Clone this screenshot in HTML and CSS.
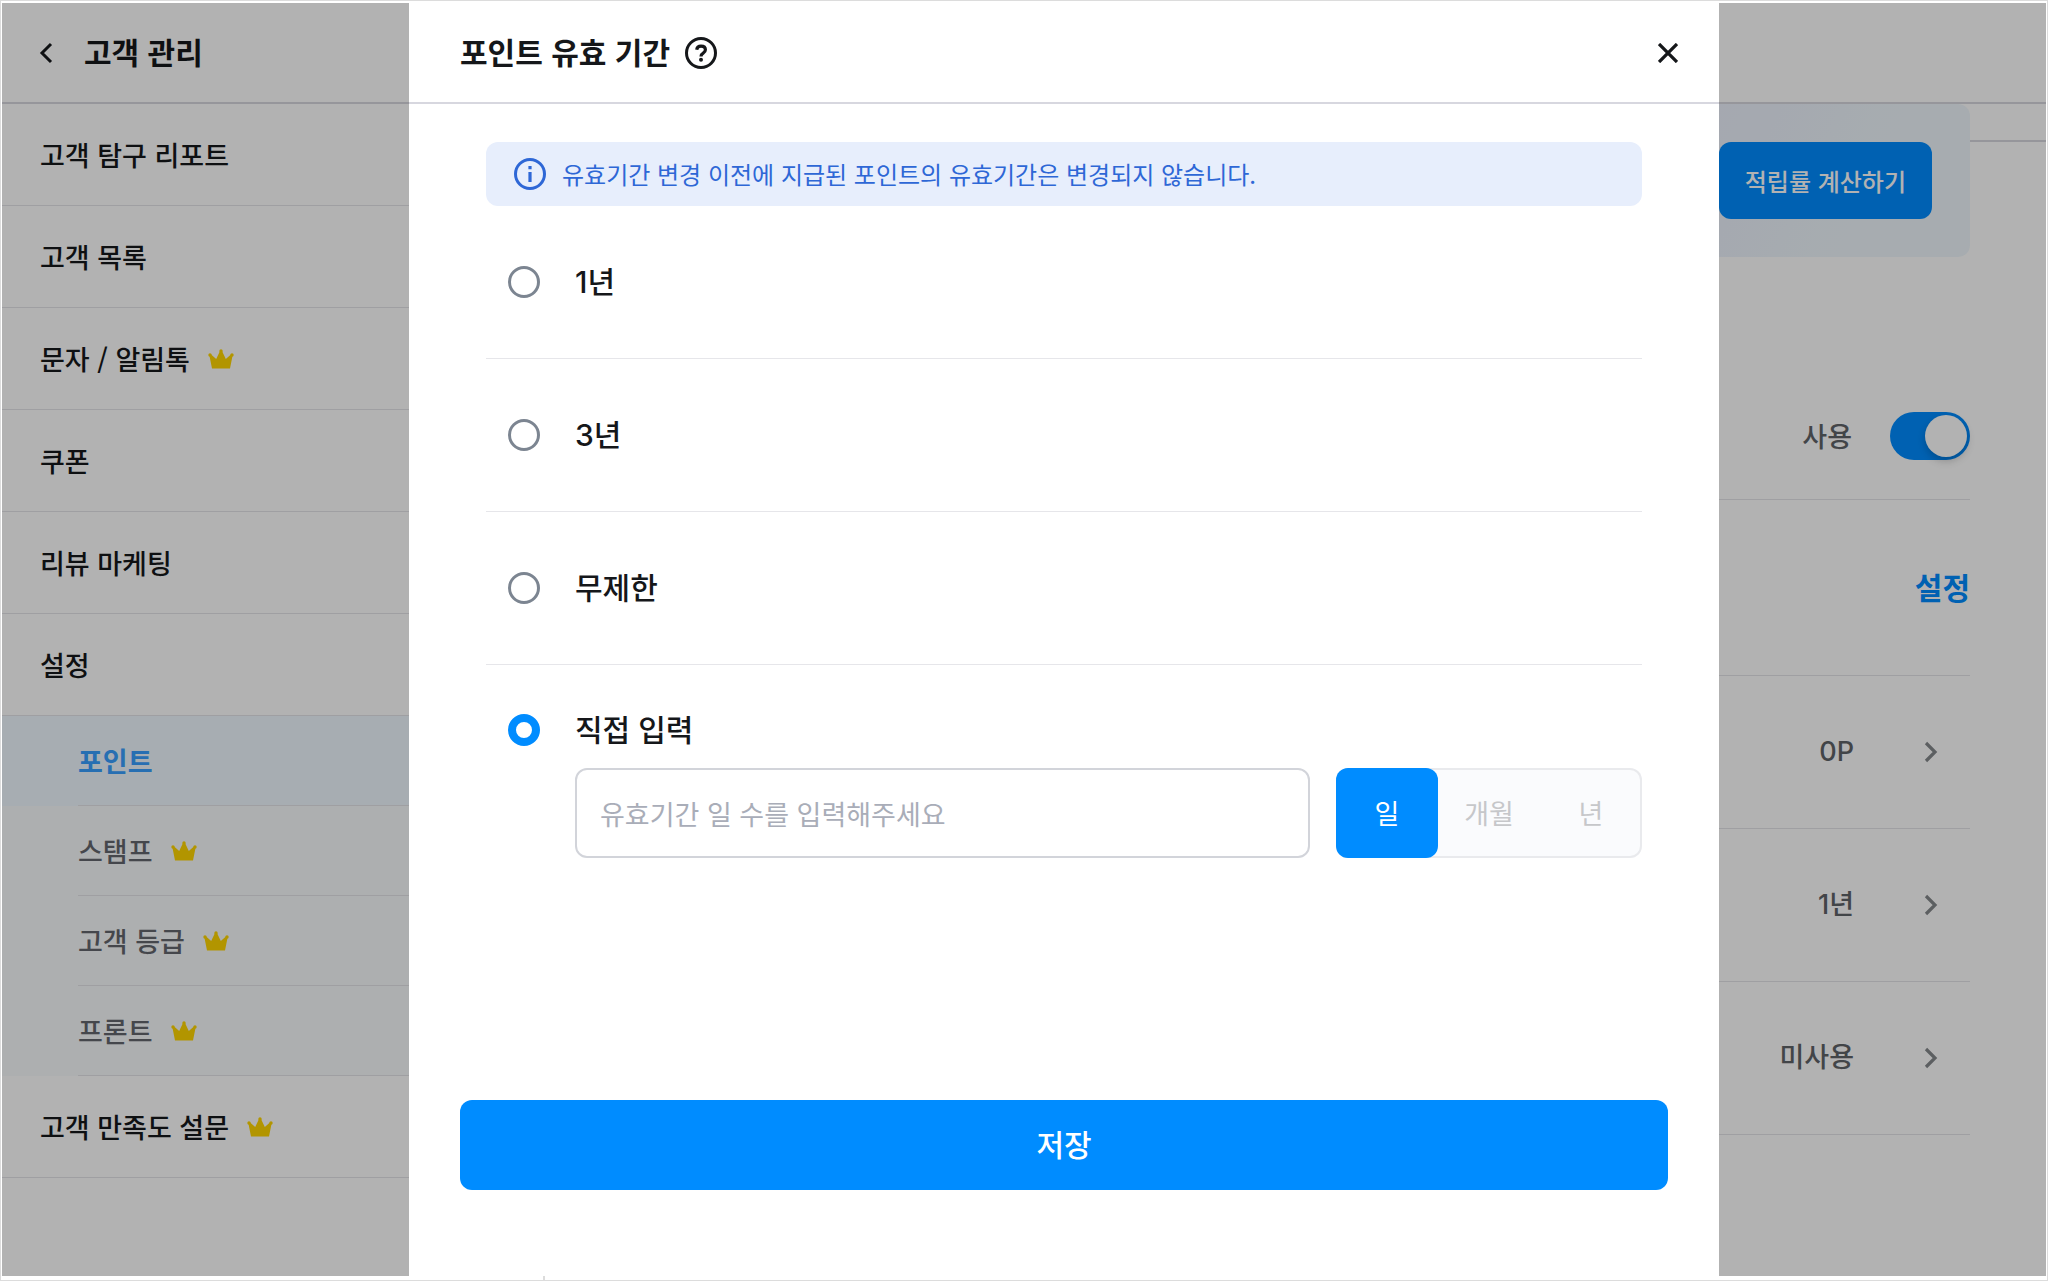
FILE: index.html
```html
<!DOCTYPE html>
<html lang="ko">
<head>
<meta charset="utf-8">
<meta name="viewport" content="width=device-width, initial-scale=1">
<title>포인트 유효 기간</title>
<link rel="stylesheet" href="styles.css">
</head>
<body>
<svg class="sprite" aria-hidden="true">
  <symbol id="crown" viewBox="0 0 26 20">
    <path d="M4 19.500 1.300 6 2.800 5.200 8.200 10 12 2h2l3.800 8 5.400-4.800 1.500.8L22 19.500Z"/>
    <circle cx="13" cy="2" r="1.700"/>
    <circle cx="2" cy="6" r="1.700"/>
    <circle cx="24" cy="6" r="1.700"/>
  </symbol>
  <symbol id="chevron" viewBox="0 0 24 24">
    <path d="M6 3 15 12 6 21" fill="none" stroke="currentColor" stroke-width="3.200"/>
  </symbol>
</svg>
<div class="frame">
  <div class="page">
    <aside class="sidebar">
      <header class="bar sidebar-head">
        <button class="icon-button" type="button" aria-label="뒤로">
          <svg class="back" viewBox="0 0 14 22"><path d="M12 2 3 11l9 9" fill="none" stroke="currentColor" stroke-width="3"/></svg>
        </button>
        <h1 class="title">고객 관리</h1>
      </header>
      <nav>
        <ul class="menu">
          <li><a class="menu-item" href="#">고객 탐구 리포트</a></li>
          <li><a class="menu-item" href="#">고객 목록</a></li>
          <li><a class="menu-item" href="#">문자 / 알림톡<svg class="crown"><use href="#crown"/></svg></a></li>
          <li><a class="menu-item" href="#">쿠폰</a></li>
          <li><a class="menu-item" href="#">리뷰 마케팅</a></li>
          <li>
            <a class="menu-item" href="#">설정</a>
            <ul class="submenu">
              <li class="active"><a class="submenu-item" href="#">포인트</a></li>
              <li><a class="submenu-item" href="#">스탬프<svg class="crown"><use href="#crown"/></svg></a></li>
              <li><a class="submenu-item" href="#">고객 등급<svg class="crown"><use href="#crown"/></svg></a></li>
              <li><a class="submenu-item" href="#">프론트<svg class="crown"><use href="#crown"/></svg></a></li>
            </ul>
          </li>
          <li><a class="menu-item" href="#">고객 만족도 설문<svg class="crown"><use href="#crown"/></svg></a></li>
        </ul>
      </nav>
    </aside>
    <main class="main">
      <div class="bar"></div>
      <div class="subbar"></div>
      <section class="banner">
        <button class="calc" type="button">적립률 계산하기</button>
      </section>
      <div class="settings">
        <div class="setting setting-use">
          <label for="use">사용</label>
          <input class="switch" id="use" type="checkbox" role="switch" checked>
        </div>
        <div class="setting setting-rate"><a class="link" href="#">설정</a></div>
        <div class="setting setting-row">0P<svg class="chevron"><use href="#chevron"/></svg></div>
        <div class="setting setting-row">1년<svg class="chevron"><use href="#chevron"/></svg></div>
        <div class="setting setting-row">미사용<svg class="chevron"><use href="#chevron"/></svg></div>
      </div>
    </main>
  </div>

  <div class="backdrop">
    <form class="modal" role="dialog" aria-labelledby="modal-title">
      <header class="bar modal-head">
        <h2 class="title" id="modal-title">포인트 유효 기간</h2>
        <button class="icon-button" type="button" aria-label="도움말">
          <svg class="round-icon" viewBox="0 0 32 32" fill="none" stroke="currentColor">
            <circle cx="16" cy="16" r="14.500" stroke-width="3"/>
            <path d="M11.700 12.800C12 10.500 13.600 9.200 16 9.200c2.600 0 4.400 1.400 4.400 3.600 0 1.600-.9 2.500-2.200 3.300-1.500.9-2.200 1.600-2.200 3.500" stroke-width="3.200"/>
            <circle cx="16" cy="22.800" r="2" fill="currentColor" stroke="none"/>
          </svg>
        </button>
        <button class="icon-button close" type="button" aria-label="닫기">
          <svg class="close-icon" viewBox="0 0 20 20"><path d="M1 1l18 18M19 1 1 19" fill="none" stroke="currentColor" stroke-width="3.300"/></svg>
        </button>
      </header>
      <div class="modal-body">
        <p class="notice">
          <svg class="round-icon" viewBox="0 0 32 32" fill="none" stroke="currentColor">
            <circle cx="16" cy="16" r="14.500" stroke-width="3"/>
            <path d="M16 14v10M16 8v3.200" stroke-width="3.200"/>
          </svg>
          유효기간 변경 이전에 지급된 포인트의 유효기간은 변경되지 않습니다.
        </p>
        <label class="option"><input class="radio" type="radio" name="period">1년</label>
        <label class="option"><input class="radio" type="radio" name="period">3년</label>
        <label class="option"><input class="radio" type="radio" name="period">무제한</label>
        <label class="option option-custom"><input class="radio" type="radio" name="period" checked>직접 입력</label>
        <div class="custom">
          <input class="days" type="text" inputmode="numeric" aria-label="유효기간" placeholder="유효기간 일 수를 입력해주세요">
          <div class="units" role="group" aria-label="단위">
            <button class="unit selected" type="button">일</button>
            <button class="unit" type="button">개월</button>
            <button class="unit" type="button">년</button>
          </div>
        </div>
      </div>
      <footer class="modal-foot"><button class="save" type="submit">저장</button></footer>
    </form>
  </div>
</div>
</body>
</html>
```
FILE: styles.css
```css
* { box-sizing: border-box; }

body {
  margin: 0;
  color: #15171a;
  background: #fff;
  font-family: "Noto Sans CJK KR", "Noto Sans", sans-serif;
  font-size: 27px;
  font-weight: 500;
  line-height: 40px;
}

h1, h2, p, ul { margin: 0; padding: 0; }
ul { list-style: none; }
a { color: inherit; text-decoration: none; }
button, input { font: inherit; color: inherit; margin: 0; }
button { padding: 0; border: 0; background: none; cursor: pointer; }
svg { display: block; flex: none; }
.sprite { display: none; }

.frame {
  position: relative;
  display: flex;
  min-height: 100vh;
  padding: 2px 1px 4px;
  border: 1px solid #dcdcdc;
}
/* stub of the divider that continues below the window */
.frame::after {
  content: "";
  position: absolute;
  left: 542px;
  bottom: 0;
  width: 2px;
  height: 4px;
  background: #dcdcdc;
}

.page { display: flex; flex: 1; }

.bar {
  display: flex;
  align-items: center;
  height: 101px;
  border-bottom: 2px solid #d7d7df;
}
.title { padding-bottom: 4px; font-size: 30px; font-weight: 700; }
.icon-button { display: flex; }

/* sidebar */
.sidebar { flex: none; width: 407px; }
.sidebar-head { gap: 31px; padding-left: 37px; }
.back { width: 14px; height: 22px; }
.menu-item {
  display: flex;
  align-items: center;
  gap: 18px;
  height: 102px;
  padding-left: 38px;
  border-bottom: 1px solid #e4e4e8;
}
.submenu { color: #63666d; background: #f8fbfd; }
.submenu li { padding-left: 76px; }
.submenu-item {
  display: flex;
  align-items: center;
  gap: 18px;
  height: 90px;
  border-bottom: 1px solid #e4e4e8;
}
.submenu .active { color: #38a0ff; background: #f0f8ff; font-weight: 700; }
.crown { width: 26px; height: 20px; fill: #ffd600; }

/* page content */
.main { flex: 1; display: flex; flex-direction: column; }
.subbar { height: 38px; border-bottom: 2px solid #d7d7df; }
.banner {
  display: flex;
  justify-content: flex-end;
  margin: -38px 76px 0 0;
  padding: 38px;
  border-radius: 0 12px 12px 0;
  background: linear-gradient(115deg, #ecf1fc 80%, #eff7fc 92%);
}
.calc {
  height: 77px;
  padding: 0 26px;
  border-radius: 12px;
  color: #fff;
  background: #008cff;
  font-size: 24px;
}
.settings { margin: 116px 76px 0 0; color: #5f6368; }
.setting {
  display: flex;
  align-items: center;
  justify-content: flex-end;
  border-bottom: 1px solid #e4e4e8;
}
.setting-use { gap: 38px; height: 127px; }
.setting-rate { height: 176px; }
.setting-row {
  gap: 66px;
  height: 153px;
  padding-right: 26px;
  font-family: Inter, "Noto Sans CJK KR", sans-serif;
}
.link { padding-bottom: 4px; color: #008cff; font-size: 30px; font-weight: 700; }
.chevron { width: 24px; height: 24px; color: #85888c; }
.switch {
  appearance: none;
  display: flex;
  justify-content: flex-end;
  width: 80px;
  height: 48px;
  padding: 3px;
  border-radius: 24px;
  background: #008cff;
}
.switch::before {
  content: "";
  width: 42px;
  height: 42px;
  border-radius: 50%;
  background: #fff;
  box-shadow: 0 4px 8px rgba(0, 0, 0, .2);
}

/* modal */
.backdrop {
  position: absolute;
  inset: 2px 1px 4px;
  display: flex;
  padding: 0 327px 0 407px;
  background: rgba(0, 0, 0, .3);
}
.modal {
  flex: 1;
  display: flex;
  flex-direction: column;
  background: #fff;
}
.modal-head { gap: 15px; padding: 0 41px 0 51px; }
.round-icon { width: 32px; height: 32px; }
.close { margin-left: auto; }
.close-icon { width: 20px; height: 20px; }
.modal-body { padding: 38px 77px 0; }
.notice {
  display: flex;
  align-items: center;
  gap: 16px;
  height: 64px;
  padding-left: 28px;
  border-radius: 12px;
  color: #2e67d6;
  background: #e7eefc;
  font-size: 24px;
  font-weight: 400;
}
.option {
  display: flex;
  align-items: center;
  gap: 35px;
  height: 153px;
  padding-left: 22px;
  border-bottom: 1px solid #e6e6ea;
  font-family: Inter, "Noto Sans CJK KR", sans-serif;
  font-size: 30px;
}
.option-custom { height: 52px; margin-top: 39px; border: 0; }
.radio {
  appearance: none;
  width: 32px;
  height: 32px;
  border: 3px solid #7c8591;
  border-radius: 50%;
}
.radio:checked { border: 8px solid #008cff; }
.custom { display: flex; gap: 26px; margin: 12px 0 0 89px; font-weight: 400; }
.days {
  flex: 1;
  min-width: 0;
  height: 90px;
  padding: 0 23px;
  border: 2px solid #d2d4da;
  border-radius: 12px;
  background: #fff;
}
.days::placeholder { color: #a9adb8; opacity: 1; }
.units {
  display: flex;
  height: 90px;
  border-radius: 12px;
  background: #fafbfd;
  box-shadow: inset 0 0 0 2px #e9eaed;
}
.unit { width: 102px; border-radius: 12px; color: #c6c7ca; }
.selected { color: #fff; background: #008cff; }
.modal-foot { margin-top: auto; padding: 0 51px 86px; }
.save {
  width: 100%;
  height: 90px;
  padding-bottom: 4px;
  border-radius: 12px;
  color: #fff;
  background: #008cff;
  font-size: 30px;
}
```
